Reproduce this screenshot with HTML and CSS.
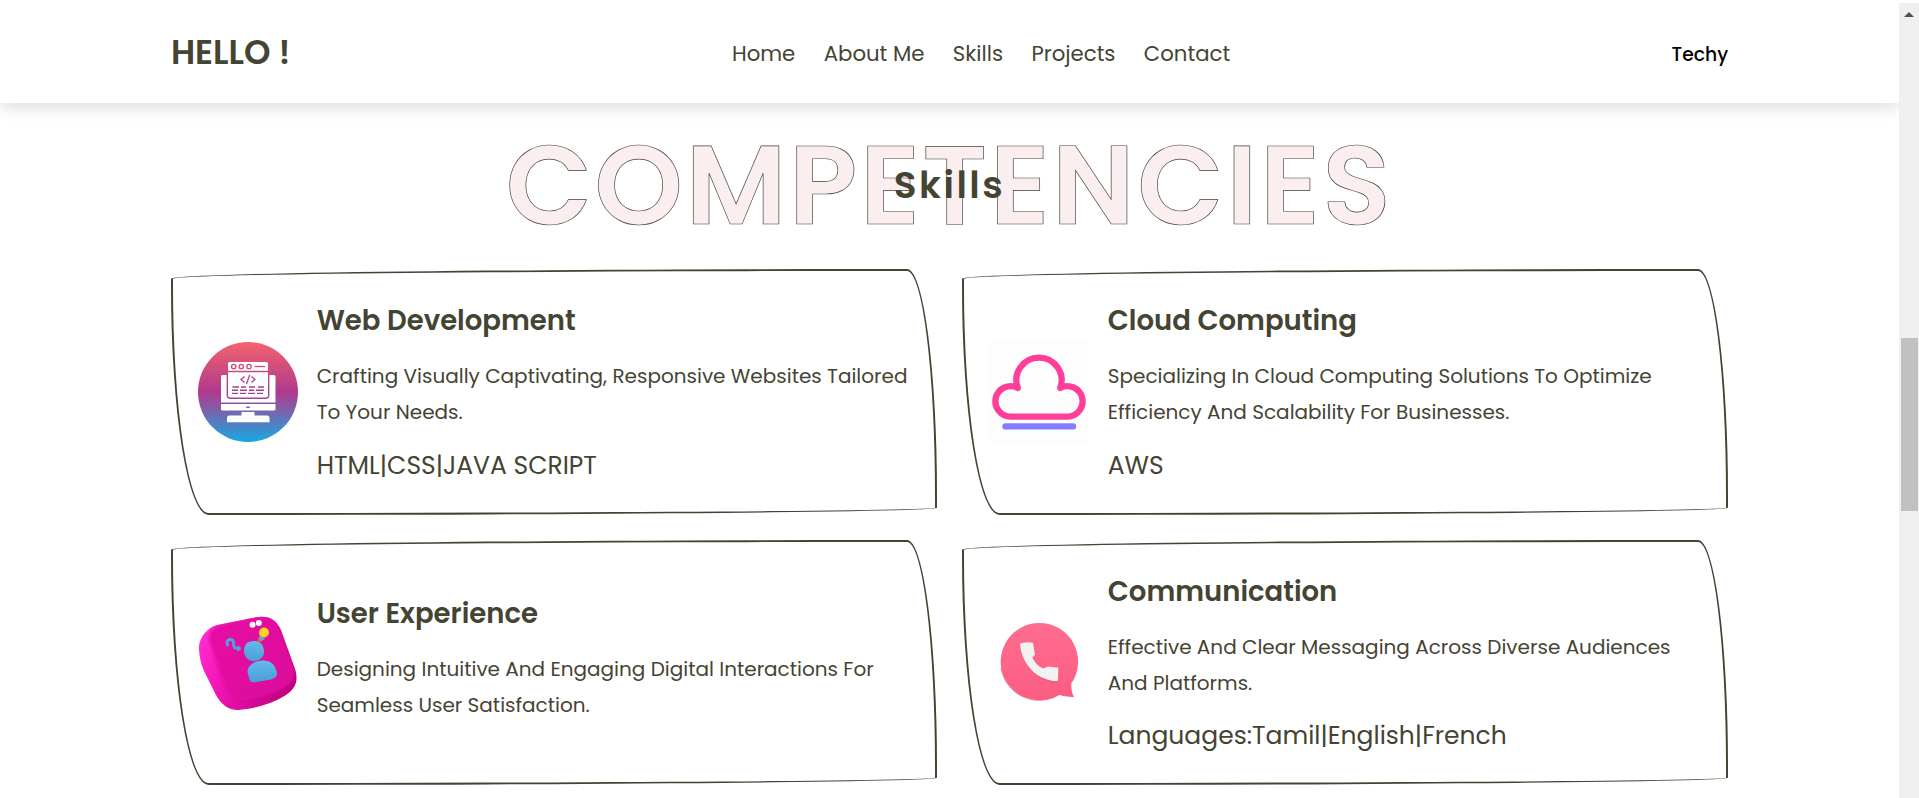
FILE: index.html
```html
<!DOCTYPE html>
<html lang="en">
<head>
<meta charset="utf-8">
<title>Skills</title>
<link rel="stylesheet" href="styles.css">
</head>
<body>
<div class="page">
  <header class="header">
    <a class="logo">HELLO !</a>
    <nav class="nav">
      <a>Home</a>
      <a>About Me</a>
      <a>Skills</a>
      <a>Projects</a>
      <a>Contact</a>
    </nav>
    <div class="brand">Techy</div>
  </header>

  <section class="skills">
    <h1 class="heading"><span class="ghost">COMPETENCIES</span><span class="front">Skills</span></h1>

    <div class="grid">
      <article class="card">
        <svg class="icon" viewBox="0 0 100 100">
          <defs>
            <linearGradient id="web-bg" x1="0" y1="0" x2="0" y2="1">
              <stop offset="0" stop-color="#f4636e"/>
              <stop offset=".5" stop-color="#ae3a8b"/>
              <stop offset=".56" stop-color="#a14696"/>
              <stop offset="1" stop-color="#17a9e1"/>
            </linearGradient>
          </defs>
          <circle cx="50" cy="50" r="50" fill="url(#web-bg)"/>
          <g fill="#fff">
            <path d="M30 28.800V21.500a1.500 1.500 0 0 1 1.500-1.500H68.500a1.500 1.500 0 0 1 1.500 1.500V28.800Z"/>
            <path d="M30 30.300H70V53a2.500 2.500 0 0 1-2.500 2.500H32.500A2.500 2.500 0 0 1 30 53Z"/>
            <path d="M23 34.500a1.500 1.500 0 0 1 1.500-1.500H28.600V53a4 4 0 0 0 4 4H67.400a4 4 0 0 0 4-4V33H76a1.500 1.500 0 0 1 1.500 1.500V60.500H23Z"/>
            <path d="M23 62H77.500V67a1.500 1.500 0 0 1-1.500 1.500H24.500A1.500 1.500 0 0 1 23 67Z"/>
            <path d="M43.500 70H56.500V73.500H69a2.500 2.500 0 0 1 2.500 2.500V80.300H29V76a2.500 2.500 0 0 1 2.500-2.500H43.500Z"/>
          </g>
          <g fill="none" stroke="#cb4980" stroke-width="1.300">
            <circle cx="35.700" cy="24.500" r="2.200"/><circle cx="43.300" cy="24.500" r="2.200"/><circle cx="51" cy="24.500" r="2.200"/>
            <path d="M56.500 24.500H67"/>
            <path d="M46.500 34.500L43 37.500L46.500 40.500M53.500 34.500L57 37.500L53.500 40.500M51.700 33L48.500 42" stroke="#b83f88"/>
          </g>
          <g stroke="#ab3c8d" stroke-width="1.400">
            <path d="M34.500 45H41M43 45H48M51 45H57M60 45H66M34 48.200H40M42 48.200H49M51 48.200H56M58 48.200H66M34 51.400H40M42 51.400H48M50 51.400H57M59 51.400H65"/>
            <path d="M48 65.200H52" stroke="#7a68ab"/>
          </g>
        </svg>
        <div class="content">
          <h3>Web Development</h3>
          <p>Crafting Visually Captivating, Responsive Websites Tailored To Your Needs.</p>
          <div class="tags">HTML|CSS|JAVA SCRIPT</div>
        </div>
      </article>

      <article class="card">
        <svg class="icon" viewBox="0 0 100 100">
          <rect width="100" height="100" fill="#fdfdfd"/>
          <path d="M28.800 46A15.200 15.200 0 1 0 21.500 74.600H78.500A15.200 15.200 0 1 0 71.200 46A22.600 22.600 0 1 0 28.800 46Z" fill="none" stroke="#ff3e9a" stroke-width="6.300" stroke-linejoin="round"/>
          <path d="M16.500 84.400H84" stroke="#8080ff" stroke-width="6.400" stroke-linecap="round"/>
        </svg>
        <div class="content">
          <h3>Cloud Computing</h3>
          <p>Specializing In Cloud Computing Solutions To Optimize Efficiency And Scalability For Businesses.</p>
          <div class="tags">AWS</div>
        </div>
      </article>

      <article class="card">
        <svg class="icon icon-low" viewBox="0 0 100 100">
          <defs>
            <linearGradient id="ux-side" x1="0" y1=".3" x2="1" y2=".8">
              <stop offset="0" stop-color="#ff2fd0"/>
              <stop offset=".3" stop-color="#f516b8"/>
              <stop offset="1" stop-color="#b80078"/>
            </linearGradient>
            <linearGradient id="ux-face" x1="0" y1="0" x2="1" y2="1">
              <stop offset="0" stop-color="#e610a2"/>
              <stop offset="1" stop-color="#dc0a9c"/>
            </linearGradient>
            <linearGradient id="ux-body" x1="0" y1="0" x2="0" y2="1">
              <stop offset="0" stop-color="#66b8ec"/>
              <stop offset="1" stop-color="#4a9fd8"/>
            </linearGradient>
            <filter id="ux-soft" x="-10%" y="-10%" width="120%" height="120%"><feGaussianBlur stdDeviation="1.500"/></filter>
            <clipPath id="ux-clip"><path d="M1 37C0 25 9 15 19 12L57 4.500C70 2 78 6 83 17L97 56C101 68 97 76 88 82C74 91 56 96 40 97C30 97 23 91 18 82L6 58C3 51 1.500 44 1 37Z"/></clipPath>
          </defs>
          <g clip-path="url(#ux-clip)">
            <rect width="100" height="100" fill="url(#ux-side)"/>
            <path d="M12 30C9 21 14 15 23 12L58 3.500C69 1.500 76 6 80 15L95 53C98 62 95 69 87 74C74 82 61 85 47 87C37 88 31 83 27 74Z" fill="url(#ux-face)" filter="url(#ux-soft)"/>
          </g>
          <g fill="#fff"><circle cx="54.500" cy="11.800" r="3"/><circle cx="60.800" cy="10" r="3"/></g>
          <circle cx="66" cy="19.500" r="5" fill="#ffd21c"/>
          <path d="M61.500 22L67 25.500L64 28L61 26Z" fill="#58aee4"/>
          <path d="M60 25L64.500 27.500L62.500 29L59.500 28Z" fill="#e07018"/>
          <path d="M29.500 32C27.500 26.500 34 24 35.500 29C36 32 35 33.500 37 35" fill="none" stroke="#4ba6de" stroke-width="3" stroke-linecap="round"/>
          <circle cx="40.500" cy="35.500" r="2.400" fill="#4ba6de"/>
          <path d="M46 38C46 31 50 28.500 55 28C61 27.500 64.500 30 65.800 36C67 43 64 46 58 48C51 49 46.500 45 46 38Z" fill="url(#ux-body)"/>
          <path d="M49.500 59C49.500 52 57 48 64 47.500C72 47 76.500 51 78.500 58C80 63 78 65 73 66.500L58 69C53 70 52 68 51 65Z" fill="url(#ux-body)"/>
        </svg>
        <div class="content">
          <h3>User Experience</h3>
          <p>Designing Intuitive And Engaging Digital Interactions For Seamless User Satisfaction.</p>
        </div>
      </article>

      <article class="card">
        <svg class="icon icon-low" viewBox="0 0 100 100">
          <defs>
            <linearGradient id="call-bg" x1="0" y1="0" x2="0" y2="1">
              <stop offset="0" stop-color="#ff6d8e"/>
              <stop offset="1" stop-color="#fc5d82"/>
            </linearGradient>
          </defs>
          <path d="M50 10A38.600 38.600 0 1 0 70.500 81.500C75 83 80 83.500 85 83.800C83 80 82.300 77 82.300 70.500A38.600 38.600 0 0 0 50 10Z" fill="url(#call-bg)"/>
          <path d="M12 55A38.600 38.600 0 0 0 70.500 81.500C75 83 80 83.500 85 83.800" fill="none" stroke="#e04f72" stroke-width="1" opacity=".6"/>
          <path d="M33.300 30.500Q38 29 43.800 30L46 42L43.500 45C46 50 50 54 54.500 56.300L59 54.500L68.700 56L69 68Q68.500 69.500 66 69.500C48 68 33 52 31.200 33Q31 30.500 33.300 30.500Z" fill="#d94a6d" opacity=".55"/>
          <path d="M32.500 30Q38 28.800 44 29.800L46 42L43.300 44.500C46 50 50 54 54.500 55.500L59 53.500L69.300 54.800L69 67Q68.500 68.300 66.500 68.200C48 67 33 52 31 31.500Q31 30.300 32.500 30Z" fill="#f2f2f2"/>
        </svg>
        <div class="content">
          <h3>Communication</h3>
          <p>Effective And Clear Messaging Across Diverse Audiences And Platforms.</p>
          <div class="tags">Languages:Tamil|English|French</div>
        </div>
      </article>
    </div>
  </section>
</div>
<aside class="scrollbar"><span class="arrow"></span><span class="thumb"></span></aside>
</body>
</html>
```
FILE: styles.css
```css
* { box-sizing: border-box; margin: 0; padding: 0; }

html { font-size: 12.5px; }

body {
  display: flex;
  height: 798px;
  overflow: hidden;
  background: #fff;
  color: #443;
  font-family: Poppins, Inter, sans-serif;
}

.page { width: 1899px; height: 798px; overflow: hidden; }

/* Header */
.header {
  display: flex;
  align-items: center;
  justify-content: space-between;
  height: 103px;
  padding: 2px 9% 0;
  background: #fff;
  box-shadow: 0 5px 15px rgba(0, 0, 0, .13);
}
.logo { padding-top: 1px; font-size: 2.7rem; font-weight: 600; }
.nav { display: flex; gap: 28.4px; padding-top: 2px; font-size: 1.7rem; }
.brand { padding-top: 3px; color: #000; font-size: 1.5rem; font-weight: 500; }

/* Section heading */
.skills { padding: 0 9%; }
.heading {
  position: relative;
  display: flex;
  align-items: center;
  justify-content: center;
  height: 166px;
  padding-bottom: 2px;
  font-weight: 600;
  letter-spacing: .2rem;
  line-height: 1;
}
.ghost {
  color: #fbeef0;
  font-size: 9rem;
  -webkit-text-stroke: .65px #443;
}
.front {
  position: absolute;
  inset: 0;
  display: flex;
  align-items: center;
  justify-content: center;
  font-size: 3rem;
}

/* Cards */
.grid { display: grid; grid-template-columns: repeat(2, minmax(0, 1fr)); gap: 2rem; }
.card {
  display: flex;
  align-items: center;
  gap: 1.5rem;
  padding: 2rem;
  border: 2px solid #443;
  border-radius: 95% 4% 97% 5% / 4% 94% 3% 95%;
}
.icon { flex: none; width: 8rem; height: 8rem; }
.icon-low { margin-top: 2px; }
.content h3 { font-size: 2.2rem; font-weight: 600; line-height: 1.8; }
.content p { padding: 1rem 0; font-size: 1.6rem; line-height: 1.8; }
.tags { font-size: 2rem; line-height: 1.8; }

/* Scrollbar */
.scrollbar {
  display: flex;
  flex-direction: column;
  align-items: center;
  width: 20px;
  height: 795px;
  margin-top: 3px;
  padding-top: 9px;
  background: #f0f0f0;
}
.arrow { border: 5px solid transparent; border-top: 0; border-bottom-color: #505050; }
.thumb { width: 17px; height: 173px; margin-top: 321px; background: #c1c1c1; }
```
